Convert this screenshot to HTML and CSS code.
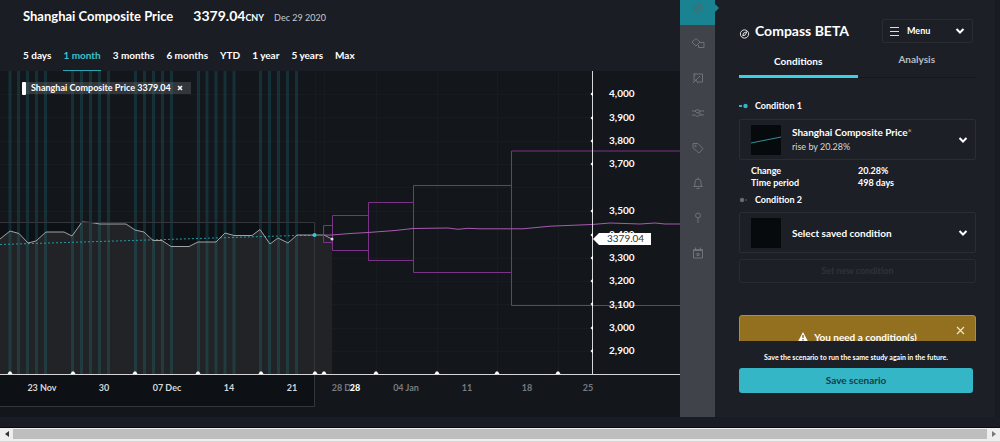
FILE: index.html
```html
<!DOCTYPE html>
<html lang="en">
<head>
<meta charset="utf-8">
<title>Compass</title>
<link rel="stylesheet" href="styles.css">
</head>
<body>
<div class="app">
  <main class="study">
    <header class="quote">
      <h1 class="quote-name">Shanghai Composite Price</h1>
      <div class="quote-price">3379.04<span class="quote-unit">CNY</span></div>
      <time class="quote-date" datetime="2020-12-29">Dec 29 2020</time>
    </header>
    <nav class="ranges" aria-label="Time range">
      <button class="range">5 days</button>
      <button class="range range-active">1 month</button>
      <button class="range">3 months</button>
      <button class="range">6 months</button>
      <button class="range">YTD</button>
      <button class="range">1 year</button>
      <button class="range">5 years</button>
      <button class="range">Max</button>
    </nav>
    <section class="chart">
      <svg class="plot" viewBox="0 71 680 346" role="img" aria-label="Shanghai Composite Price forecast">
        <defs>
          <path id="tick" d="M-2.5 0L-1-2.5H1L2.5 0Z" fill="#fff"/>
          <path id="mark" d="M0-2.5L-2.5 0L0 2.5Z" fill="#fff"/>
        </defs>
        <path class="grid" d="M0 94.5H592M0 117.5H592M0 141.5H592M0 164.5H592M0 187.5H592M0 211.5H592M0 258.5H592M0 281.5H592M0 304.5H592M0 328.5H592M0 351.5H592M315.5 71V374M324.5 71V374M376.5 71V374M437.5 71V374M497.5 71V374M558.5 71V374"/>
        <rect class="past" x="0" y="222" width="314" height="184"/>
        <path class="area" d="M0 239L10 231L19 233.500L28 243L36 241L46 232H64L72 236L82 222L91 222.500L100 224H126L135 230L144 232L153 240.500H162L171 246.500H189L198 242H216L225 233L234 235.500H252L260 229.500L270 244L278 238L288 243L297 235H324L332 239V374H0Z"/>
        <path class="session" d="M10 71V374M18.500 71V374M27.500 71V374M36.500 71V374M45.500 71V374M72.500 71V374M81.500 71V374M90.500 71V374M99.500 71V374M108.500 71V374M135.500 71V374M144.500 71V374M153.500 71V374M162.500 71V374M171.500 71V374M198.500 71V374M207 71V374M216 71V374M225 71V374M234 71V374M260.500 71V374M269.500 71V374M278.500 71V374M287.500 71V374M296.500 71V374"/>
        <path class="trend" d="M0 244.500L297 235.500H314"/>
        <path class="price" d="M0 239L10 231L19 233.500L28 243L36 241L46 232H64L72 236L82 222L91 222.500L100 224H126L135 230L144 232L153 240.500H162L171 246.500H189L198 242H216L225 233L234 235.500H252L260 229.500L270 244L278 238L288 243L297 235H324L332 239"/>
        <path class="past-edge" d="M0 222.500H314.500V406.500H0"/>
        <path class="cone" d="M323.500 225.500H332.500V242.500H323.500ZM332.500 215.500H368.500V250.500H332.500ZM368.500 202.500H413.500V260.500H368.500ZM413.500 185.500H511.500V272.500H413.500ZM681 151H511.500V305.500H681"/>
        <path class="median" d="M324 235H332L350 233.500L368 232.500L395 230.500L413 228.500L448 228L458 229.300L468 228.300L480 228.800H523L550 226.200L592 224.500L610 223L640 224L655 223L665 224H680"/>
        <circle cx="314.500" cy="235" r="2" fill="#35c8dc"/>
        <circle cx="332" cy="239" r="1.500" fill="#ddd"/>
        <path class="axis" d="M0 374.500H680M592.500 71V374"/>
        <g>
          <use href="#tick" x="10" y="374"/><use href="#tick" x="73" y="374"/><use href="#tick" x="135" y="374"/><use href="#tick" x="198" y="374"/><use href="#tick" x="261" y="374"/><use href="#tick" x="315" y="374"/><use href="#tick" x="324" y="374"/><use href="#tick" x="376" y="374"/><use href="#tick" x="437" y="374"/><use href="#tick" x="497" y="374"/><use href="#tick" x="558" y="374"/>
        </g>
        <g>
          <use href="#mark" x="593" y="94"/><use href="#mark" x="593" y="118"/><use href="#mark" x="593" y="141"/><use href="#mark" x="593" y="164"/><use href="#mark" x="593" y="211"/><use href="#mark" x="593" y="235"/><use href="#mark" x="593" y="258"/><use href="#mark" x="593" y="281"/><use href="#mark" x="593" y="304"/><use href="#mark" x="593" y="328"/><use href="#mark" x="593" y="351"/>
        </g>
        <g class="level">
          <text x="609" y="97">4,000</text><text x="609" y="121">3,900</text><text x="609" y="144">3,800</text><text x="609" y="167">3,700</text><text x="609" y="214">3,500</text><text x="609" y="238">3,400</text><text x="609" y="261">3,300</text><text x="609" y="284">3,200</text><text x="609" y="308">3,100</text><text x="609" y="331">3,000</text><text x="609" y="354">2,900</text>
        </g>
        <path d="M593 239L599 233H651V245H599Z" fill="#fff"/>
        <text class="last" x="607" y="242">3379.04</text>
        <g class="day">
          <text x="42" y="391">23 Nov</text><text x="104" y="391">30</text><text x="167" y="391">07 Dec</text><text x="229" y="391">14</text><text x="292" y="391">21</text>
        </g>
        <g class="day day-ahead">
          <text x="346" y="391">28 Dec</text><text x="406" y="391">04 Jan</text><text x="467" y="391">11</text><text x="527" y="391">18</text><text x="588" y="391">25</text>
        </g>
        <rect x="350" y="382" width="11" height="11" fill="#13161b"/>
        <text class="day-now" x="355" y="391">28</text>
      </svg>
      <div class="legend">
        <span class="legend-key"></span>
        <span>Shanghai Composite Price 3379.04</span>
        <button class="legend-close" aria-label="Remove series"><svg width="6" height="6" viewBox="0 0 6 6"><path d="M1 1L5 5M5 1L1 5" stroke="#fff" stroke-width="1.500"/></svg></button>
      </div>
    </section>
  </main>

  <nav class="rail" aria-label="Tools">
    <button class="tool tool-active" aria-label="Compass"><svg viewBox="0 0 14 14"><circle cx="7" cy="7" r="4.500"/><path d="M5 9L6 6L9 5L8 8Z"/></svg></button>
    <button class="tool" aria-label="Shapes"><svg viewBox="0 0 14 14"><path d="M5 2.500L9 6L5 10L1 6Z"/><path d="M9 6.500H13V11.500H7.500V9"/></svg></button>
    <button class="tool" aria-label="Notes"><svg viewBox="0 0 14 14"><path d="M3 8V3H11.500V11H7M4 5L3 2M5 9L9 5M2 12L5 9L7 12M5 9H2"/></svg></button>
    <button class="tool" aria-label="Scenarios"><svg viewBox="0 0 14 14"><path d="M1 5H4L6 3.500L9 5H13M1 9H4L6 10.500L9 9H13M4 5L6 7H9L10 9M9 5L7 7"/></svg></button>
    <button class="tool" aria-label="Tags"><svg viewBox="0 0 14 14"><path d="M2 2.500H7L12 7.500L8 12L2 7Z"/><circle cx="4.500" cy="5" r=".8"/></svg></button>
    <button class="tool" aria-label="Alerts"><svg viewBox="0 0 14 14"><path d="M2.500 10.500H11.500L10 9V6Q10 3 7 3Q4 3 4 6V9ZM7 1.500V3M5.500 12.500H8.500"/></svg></button>
    <button class="tool" aria-label="Pins"><svg viewBox="0 0 14 14"><circle cx="7" cy="4.500" r="2.500"/><path d="M7 7V12"/></svg></button>
    <button class="tool" aria-label="Calendar"><svg viewBox="0 0 14 14"><path d="M2.500 3.500H11.500V12H2.500ZM2.500 4.500H11.500M4.500 1.500V4M9.500 1.500V4"/><path d="M6 7.500H8V9.500H6Z"/></svg></button>
  </nav>

  <aside class="panel">
    <div class="panel-scroll">
      <header class="panel-head">
        <svg class="panel-logo" viewBox="0 0 12 12"><circle cx="6" cy="6" r="4.500"/><path d="M4 8L5 5L8.500 3.500L7 7Z"/></svg>
        <h2 class="panel-title">Compass BETA</h2>
        <button class="menu">
          <svg width="10" height="9" viewBox="0 0 10 9"><path d="M0 .5H9M0 4.500H9M0 8.500H9" stroke="#ddd" stroke-width="1"/></svg>
          <span>Menu</span>
          <svg class="chevron" viewBox="0 0 10 6"><path d="M1.500 1L5 4.500L8.500 1"/></svg>
        </button>
      </header>
      <div class="tabs" role="tablist">
        <button class="tab tab-active" role="tab" aria-selected="true">Conditions</button>
        <button class="tab" role="tab" aria-selected="false">Analysis</button>
      </div>
      <h3 class="condition"><svg width="10" height="6" viewBox="0 0 10 6" fill="#34b4c3"><path d="M0 2H3V4H0Z"/><circle cx="6.500" cy="3" r="2.200"/></svg>Condition 1</h3>
      <button class="card">
        <svg class="thumb" viewBox="0 0 30 30"><path d="M0 18L30 12" stroke="#2b929b"/></svg>
        <span class="card-text"><span class="card-title">Shanghai Composite Price<span class="star">*</span></span><span class="card-sub">rise by 20.28%</span></span>
        <svg class="chevron" viewBox="0 0 10 6"><path d="M1.500 1L5 4.500L8.500 1"/></svg>
      </button>
      <dl class="facts">
        <dt>Change</dt><dd>20.28%</dd>
        <dt>Time period</dt><dd>498 days</dd>
      </dl>
      <h3 class="condition condition-next"><svg width="10" height="6" viewBox="0 0 10 6"><circle cx="3" cy="3" r="2.200" fill="#676b70"/><path d="M6 2H8V4H6Z" fill="#3c4046"/></svg>Condition 2</h3>
      <button class="card">
        <svg class="thumb" viewBox="0 0 30 30"></svg>
        <span class="card-text"><span class="card-title">Select saved condition</span></span>
        <svg class="chevron" viewBox="0 0 10 6"><path d="M1.500 1L5 4.500L8.500 1"/></svg>
      </button>
      <button class="new-condition" disabled>Set new condition</button>
      <div class="warning" role="alert">
        <span class="warning-text"><svg width="10" height="10" viewBox="0 0 10 10"><path d="M5 0L10 9.500H0Z" fill="#fff"/><path d="M5 3V6M5 7V8.500" stroke="#93701f" stroke-width="1.500"/></svg>You need a condition(s)</span>
        <button class="warning-close" aria-label="Dismiss"><svg width="9" height="9" viewBox="0 0 9 9"><path d="M1 1L8 8M8 1L1 8" stroke="#f3e6c5" stroke-width="1.200"/></svg></button>
      </div>
    </div>
    <footer class="save">
      <p class="save-note">Save the scenario to run the same study again in the future.</p>
      <button class="save-button">Save scenario</button>
    </footer>
  </aside>
</div>
<div class="scrollbar">
  <button class="scroll-arrow" aria-label="Scroll left"><svg width="4" height="6" viewBox="0 0 4 6"><path d="M4 0V6L0 3Z" fill="#333"/></svg></button>
  <div class="scroll-thumb"></div>
  <button class="scroll-arrow" aria-label="Scroll right"><svg width="4" height="6" viewBox="0 0 4 6"><path d="M0 0V6L4 3Z" fill="#777"/></svg></button>
</div>
</body>
</html>
```
FILE: styles.css
```css
* { box-sizing: border-box; }
body { margin: 0; background: #191c24; color: #fff; font: 700 10px/12px Lato, "Open Sans", sans-serif; overflow: hidden; }
h1, h2, h3, p, dl, dd { margin: 0; }
button { margin: 0; padding: 0; border: 0; background: none; color: inherit; font: inherit; }
svg { display: block; flex: none; }

.app { display: grid; grid-template-columns: minmax(0, 1fr) 35px 285px; padding-bottom: 10px; border-bottom: 1px solid #0a0b0e; }
.study { background: #1a1d23; }
.quote { display: flex; align-items: baseline; padding: 6px 23px 0; line-height: 20px; }
.quote-name { font-size: 13px; line-height: 20px; margin-right: 20px; }
.quote-price { font-size: 14px; margin-right: 10px; }
.quote-unit { font-size: 9px; }
.quote-date { font-size: 9px; font-weight: 400; color: #c8cbcf; }
.ranges { display: flex; gap: 12px; padding: 18px 23px 0; }
.range { height: 25px; padding-bottom: 6px; border-bottom: 1px solid transparent; }
.range-active { color: #38c2cf; border-color: #2ba6b2; }

.chart { position: relative; background: #13161b; }
.plot { width: 100%; height: auto; }
.grid { stroke: #181b20; fill: none; }
.past { fill: #0d1014; }
.area { fill: #222326; }
.session { stroke: #1fa0ac; stroke-opacity: .2; stroke-width: 3; }
.trend { stroke: #279aa4; stroke-dasharray: 2 2; fill: none; }
.price { stroke: #a0a2a4; fill: none; }
.past-edge { stroke: #33373b; fill: none; }
.cone { stroke: #7c3387; fill: none; }
.median { stroke: #a85ab1; fill: none; }
.axis { stroke: #d5d6d8; fill: none; }
.level { fill: #fff; font-size: 10px; }
.last { fill: #333; font-size: 10px; font-weight: 400; }
.day { fill: #d5d7d9; font-size: 9px; text-anchor: middle; }
.day-ahead { fill: #777b80; }
.day-now { fill: #fff; font-size: 9px; font-weight: 900; text-anchor: middle; }
.legend { position: absolute; top: 11px; left: 22px; display: flex; align-items: center; gap: 5px; height: 12px; padding-right: 8px; background: rgba(90, 95, 99, .45); font-size: 9px; }
.legend-key { width: 4px; height: 13px; border-radius: 1px; background: #fff; }
.legend-close { margin-left: 1px; }

.rail { display: flex; flex-direction: column; background: #40444a; }
.tool { position: relative; display: flex; align-items: center; justify-content: center; height: 35px; }
.tool svg { width: 14px; height: 14px; fill: none; stroke: #6e7277; }
.tool-active { height: 25px; padding-bottom: 10px; background: #198391; }
.tool-active::after { content: ""; position: absolute; left: 100%; top: 4px; border: 4px solid transparent; border-left-color: #198391; border-right: 0; }
.tool-active svg { stroke: #486b70; }

.panel { display: flex; flex-direction: column; padding: 0 19px 0 24px; border-right: 5px solid #181b21; background: #1c2026; }
.panel-scroll { height: 341px; overflow: hidden; }
.panel-head { display: flex; align-items: center; gap: 5px; padding-top: 19px; padding-right: 3px; }
.panel-logo { width: 11px; height: 12px; margin-top: 6px; fill: none; stroke: #eee; }
.panel-title { font-size: 14px; line-height: 20px; }
.menu { display: flex; align-items: center; gap: 7px; width: 91px; height: 24px; margin-left: auto; padding: 0 7px; border: 1px solid #292d33; border-radius: 2px; font-size: 9px; }
.chevron { width: 10px; height: 6px; margin-left: auto; fill: none; stroke: #fff; stroke-width: 2; }
.tabs { display: grid; grid-template-columns: 1fr 1fr; height: 35px; border-bottom: 1px solid #15181d; }
.tab { display: flex; justify-content: center; height: 35px; padding-top: 10px; color: #b9bcc0; }
.tab-active { padding-top: 12px; border-bottom: 3px solid #3bd0e2; color: #fff; }
.condition { display: flex; align-items: center; gap: 6px; margin-top: 22px; font-size: 9px; line-height: 12px; }
.condition-next { margin-top: 5px; }
.card { display: flex; align-items: center; gap: 11px; width: 100%; height: 41px; margin-top: 7px; padding: 0 7px 0 11px; border: 1px solid #2a2e34; border-radius: 2px; text-align: left; }
.condition-next + .card { margin-top: 6px; }
.thumb { width: 30px; height: 30px; background: #070a0c; fill: none; }
.card-text { display: flex; flex-direction: column; gap: 3px; }
.card-sub { font-size: 9px; font-weight: 400; color: #d5d7d9; }
.star { color: #d08b4c; }
.facts { display: grid; grid-template-columns: 107px 1fr; padding: 5px 12px 0; font-size: 9px; }
.new-condition { width: 100%; height: 24px; margin-top: 6px; border: 1px solid #272b31; border-radius: 2px; font-size: 9px; color: #2e3338; }
.warning { display: flex; align-items: flex-start; justify-content: center; position: relative; height: 50px; margin-top: 32px; padding-top: 15px; border: 1px solid #b98c30; border-radius: 3px; background: #93701f; }
.warning-text { display: flex; align-items: center; gap: 6px; }
.warning-close { position: absolute; top: 10px; right: 10px; }
.save { padding: 10px 3px 24px 0; text-align: center; }
.save-note { font-size: 7px; line-height: 12px; white-space: nowrap; }
.save-button { width: 100%; height: 25px; margin-top: 5px; padding-bottom: 2px; border-radius: 3px; background: #34b6c6; color: #173c43; }

.scrollbar { display: flex; height: 14px; padding: 1px 0 2px; border-bottom: 1px solid #d5d5d5; background: #eee; }
.scroll-arrow { display: flex; align-items: center; justify-content: center; width: 13px; }
.scroll-thumb { flex: 1; background: #bebebe; }
```
